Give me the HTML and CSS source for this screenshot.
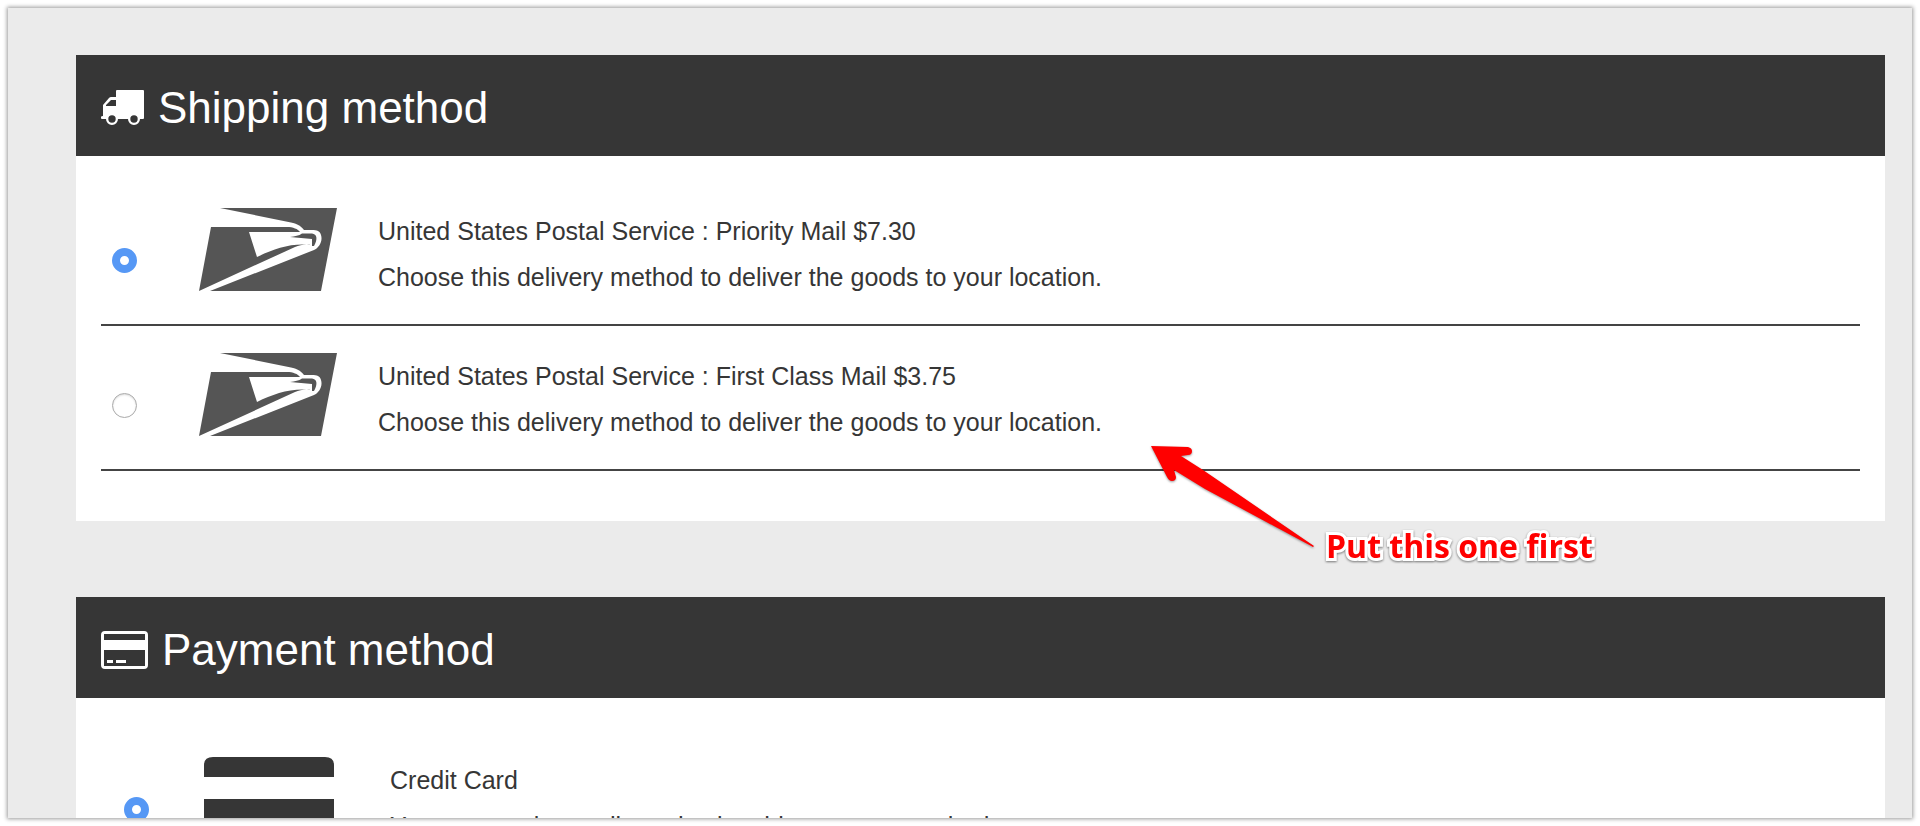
FILE: index.html
```html
<!DOCTYPE html>
<html lang="en">
<head>
  <meta charset="UTF-8">
  <meta name="viewport" content="width=device-width, initial-scale=1.0">
  <title>Checkout</title>
  <link rel="stylesheet" href="styles.css">
</head>
<body>

  <!-- Logo shape shared by the shipping rows -->
  <svg class="sprite" width="0" height="0" aria-hidden="true">
    <symbol id="usps" viewBox="0 0 138 83">
      <path d="M21 0H138L122 83H11L115 42C120 40 124 33 122 27C121 23 118 22 113 22H105C101 17 98 16 92 14.500Z"/>
      <path d="M12 19H88C94 19 99 21 101 24H50L58 49C75 41 91 35 112 37C106 36 101 37 96 39L0 83Z"/>
      <path d="M91 29C96 28 100 28 103 25.500H113C118 26 119 31 115 38L113 38V31Z"/>
    </symbol>
  </svg>

  <main class="page">

    <section class="panel">
      <header class="panel-header">
        <svg class="icon-truck" viewBox="0 0 43 35" aria-hidden="true">
          <path fill-rule="evenodd" d="M16 0H42Q43 0 43 1V28Q43 29 42 29H39A6 6 0 0 1 27 29H17A6 6 0 0 1 5 29H1Q0 29 0 28V27Q0 26 2 26V15L8 8Q9 7 10 7H15V1Q15 0 16 0ZM5 16H15V10H10L5 15ZM11 25.300A3.700 3.700 0 1 0 11 32.700A3.700 3.700 0 1 0 11 25.300ZM33 25.300A3.700 3.700 0 1 0 33 32.700A3.700 3.700 0 1 0 33 25.300Z"/>
        </svg>
        <h2>Shipping method</h2>
      </header>
      <div class="panel-body">
        <label class="method">
          <input type="radio" name="shipping" checked>
          <svg class="method-logo" viewBox="0 0 138 83" aria-hidden="true"><use href="#usps"/></svg>
          <span class="method-text">
            <span>United States Postal Service : Priority Mail $7.30</span>
            <span>Choose this delivery method to deliver the goods to your location.</span>
          </span>
        </label>
        <label class="method">
          <input type="radio" name="shipping">
          <svg class="method-logo" viewBox="0 0 138 83" aria-hidden="true"><use href="#usps"/></svg>
          <span class="method-text">
            <span>United States Postal Service : First Class Mail $3.75</span>
            <span>Choose this delivery method to deliver the goods to your location.</span>
          </span>
        </label>
      </div>
    </section>

    <section class="panel">
      <header class="panel-header">
        <svg class="icon-card" viewBox="0 0 47 38" aria-hidden="true">
          <path fill-rule="evenodd" d="M4 0H43Q47 0 47 4V34Q47 38 43 38H4Q0 38 0 34V4Q0 0 4 0ZM3 3V9H44V3ZM3 19V35H44V19ZM6 29H12V32H6ZM15 29H25V32H15Z"/>
        </svg>
        <h2>Payment method</h2>
      </header>
      <div class="panel-body payment">
        <label class="method">
          <input type="radio" name="payment" checked>
          <svg class="method-logo" viewBox="0 0 130 104" aria-hidden="true">
            <path d="M0 20V8Q0 0 9 0H121Q130 0 130 8V20ZM0 42H130V96Q130 104 122 104H8Q0 104 0 96Z"/>
          </svg>
          <span class="method-text">
            <span>Credit Card</span>
            <span>You can pay by credit card using this payment method.</span>
          </span>
        </label>
      </div>
    </section>

    <div class="note">
      <svg class="note-arrow" viewBox="0 0 164 102" aria-hidden="true">
        <path d="M0 0L37 1Q41 2 41 5Q41 9 37 9L30 10L52 24L163 100L162 101L54 43L23 24L25 31Q25 35 21 35Q18 35 16 31Z"/>
      </svg>
      <p>Put this one first</p>
    </div>

  </main>

</body>
</html>
```
FILE: styles.css
```css
* {
  margin: 0;
  padding: 0;
  box-sizing: border-box;
}
body {
  background: #fff;
  color: #363636;
  font-family: "Liberation Sans", Arial, sans-serif;
  font-size: 25px;
  line-height: 46px;
  padding: 8px;
}
.sprite {
  position: absolute;
}

/* Page frame */
.page {
  position: relative;
  height: calc(100vh - 16px);
  overflow: hidden;
  padding: 47px 27px 0 68px;
  background: #ebebeb;
  box-shadow: 0 0 4px 1px rgba(0, 0, 0, 0.4);
}

/* Panels */
.panel {
  margin-bottom: 76px;
  background: #fff;
}
.panel-header {
  display: flex;
  align-items: center;
  gap: 14px;
  height: 101px;
  padding: 4px 25px 0;
  background: #363636;
  color: #fff;
}
.panel-header h2 {
  font-size: 44px;
  font-weight: normal;
}
.panel-header svg {
  fill: #fff;
}
.icon-truck {
  width: 43px;
  height: 35px;
}
.icon-card {
  width: 47px;
  height: 38px;
}
.panel-body {
  padding: 25px 25px 50px;
}
.payment {
  padding: 32px 37px;
}

/* Method rows */
.method {
  display: flex;
  align-items: flex-start;
  padding: 27px 0 24px 11px;
  border-bottom: 2px solid #444;
}
.method input {
  appearance: none;
  flex: none;
  width: 25px;
  height: 25px;
  margin: 40px 62px 0 0;
  border: 1px solid #aaa;
  border-radius: 50%;
  box-shadow: inset 0 1px 2px rgba(0, 0, 0, 0.15);
}
.method input:checked {
  border: 8px solid #5698f5;
  box-shadow: none;
}
.method-logo {
  flex: none;
  width: 138px;
  margin-right: 41px;
  fill: #555;
}
.method-text span {
  display: block;
}
.payment .method input {
  margin-right: 55px;
}
.payment .method-logo {
  width: 130px;
  margin-right: 56px;
  fill: #363636;
}

/* Annotation */
.note {
  position: absolute;
  top: 438px;
  left: 1143px;
  display: flex;
  gap: 11px;
  color: #f00;
}
.note-arrow {
  width: 164px;
  height: 102px;
  fill: #f00;
  filter: drop-shadow(0 1px 1px rgba(0, 0, 0, 0.4));
}
.note p {
  margin-top: 77px;
  font-family: "Open Sans", "Noto Sans", sans-serif;
  font-size: 32px;
  font-weight: bold;
  -webkit-text-stroke: 6px #fff;
  paint-order: stroke fill;
  filter: drop-shadow(0 1px 1px rgba(0, 0, 0, 0.5));
}
```
